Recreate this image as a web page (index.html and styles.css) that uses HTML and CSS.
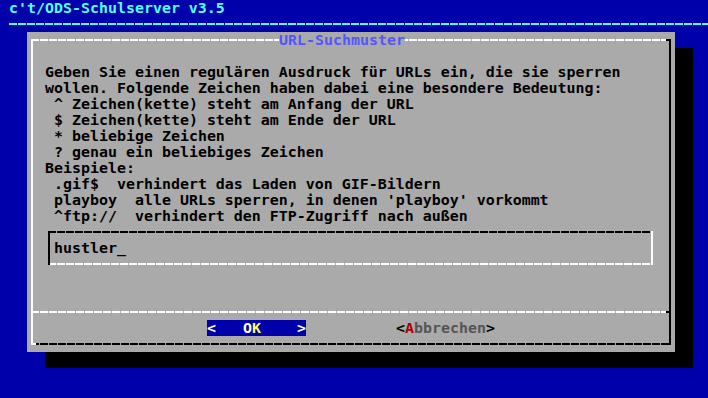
FILE: index.html
```html
<html>
<head>
<title>c't/ODS-Schulserver v3.5</title>
<link rel="stylesheet" href="styles.css">
</head>
<body>

<div class="screen">
  <div class="backtitle">c't/ODS-Schulserver v3.5</div>
  <div class="backrule"></div>

  <div class="dialog">
    <div class="dlg-top"><span class="dlg-title">URL-Suchmuster</span></div>
    <div class="dlg-blank"></div>
    <div class="dlg-text">Geben Sie einen regulären Ausdruck für URLs ein, die sie sperren
wollen. Folgende Zeichen haben dabei eine besondere Bedeutung:
 ^ Zeichen(kette) steht am Anfang der URL
 $ Zeichen(kette) steht am Ende der URL
 * beliebige Zeichen
 ? genau ein beliebiges Zeichen
Beispiele:
 .gif$  verhindert das Laden von GIF-Bildern
 playboy  alle URLs sperren, in denen 'playboy' vorkommt
 ^ftp://  verhindert den FTP-Zugriff nach außen</div>
    <div class="field">hustler_</div>
    <div class="dlg-blank2"></div>
    <div class="dlg-sep"></div>
    <div class="dlg-buttons">
      <span class="btn btn-active">&lt;   O<span class="hot-active">K</span>    &gt;</span>
      <span class="btn">&lt;<span class="hot">A</span><span class="btn-label">bbrechen</span>&gt;</span>
    </div>
    <div class="dlg-bottom"></div>
  </div>
</div>

</body>
</html>
```

FILE: styles.css
```css
body {
  margin: 0;
  background-color: #0000aa;
  overflow: hidden;
}
.screen {
  width: 720px;
  height: 400px;
  font-family: "DejaVu Sans Mono", "Liberation Mono", monospace;
  font-weight: bold;
  font-size: 14.95px;
  line-height: 16px;
}
.backtitle {
  height: 16px;
  padding-left: 9px;
  color: #55ffff;
  white-space: pre;
}
.backrule {
  height: 16px;
  margin-left: 9px;
  background: repeating-linear-gradient(90deg, #55ffff 0 8px, transparent 8px 9px) 0 7px / 100% 2px no-repeat;
}

/* the dialog box, lines are drawn as backgrounds like the line chars */
.dialog {
  margin-left: 27px;
  width: 648px;
  height: 320px;
  box-shadow: 18px 16px 0 #000;
  background:
    linear-gradient(#fff, #fff) 4px 7px / 2px 306px no-repeat,
    linear-gradient(#000, #000) 642px 7px / 2px 306px no-repeat,
    #aaaaaa;
  color: #000;
}
.dlg-top {
  height: 16px;
  margin: 0 4px;
  background:
    linear-gradient(#000, #000) 100% 7px / 5px 2px no-repeat,
    repeating-linear-gradient(90deg, #fff 0 8px, transparent 8px 9px) 0 7px / 100% 2px no-repeat;
}
.dlg-title {
  display: inline-block;
  margin-left: 248px;
  background-color: #aaaaaa;
  color: #5555ff;
}
.dlg-blank {
  height: 16px;
}
.dlg-text {
  height: 160px;
  padding-left: 18px;
  white-space: pre;
}
.field {
  height: 16px;
  width: 599px;
  margin: 7px 0 7px 21px;
  padding: 9px 0 9px 6px;
  white-space: pre;
  background:
    linear-gradient(#000, #000) 0 0 / 2px 100% no-repeat,
    linear-gradient(#fff, #fff) 100% 0 / 2px 100% no-repeat,
    repeating-linear-gradient(90deg, #000 0 8px, transparent 8px 9px) 0 0 / 100% 2px no-repeat,
    repeating-linear-gradient(90deg, #fff 0 8px, transparent 8px 9px) 0 100% / 100% 2px no-repeat;
}
.dlg-blank2 {
  height: 32px;
}
.dlg-sep {
  height: 16px;
  margin: 0 4px;
  background:
    linear-gradient(#000, #000) 100% 7px / 5px 2px no-repeat,
    repeating-linear-gradient(90deg, #fff 0 8px, transparent 8px 9px) 0 7px / 100% 2px no-repeat;
}
.dlg-buttons {
  display: flex;
  gap: 90px;
  height: 16px;
  padding-left: 180px;
}
.btn {
  white-space: pre;
  color: #000;
}
.btn-active {
  background-color: #0000aa;
  color: #fff;
}
.hot-active {
  color: #ffff55;
}
.hot {
  color: #aa0000;
}
.btn-label {
  color: #555555;
}
.dlg-bottom {
  height: 16px;
  margin: 0 4px;
  background:
    linear-gradient(#fff, #fff) 0 7px / 5px 2px no-repeat,
    repeating-linear-gradient(90deg, #000 0 8px, transparent 8px 9px) 0 7px / 100% 2px no-repeat;
}
```
